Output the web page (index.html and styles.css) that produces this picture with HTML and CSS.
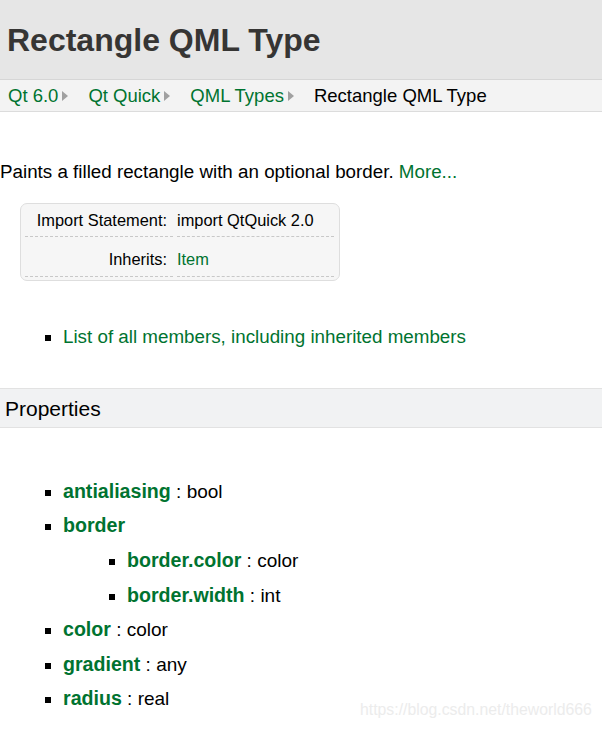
FILE: index.html
```html
<!DOCTYPE html>
<html lang="en">
<head>
    <meta charset="UTF-8">
    <title>Rectangle QML Type</title>
    <link rel="stylesheet" href="styles.css">
</head>
<body>
    <div class="header">
        <h1>Rectangle QML Type</h1>
    </div>
    <div class="crumbs">
        <a href="#">Qt 6.0</a><span class="arrow"></span>
        <a href="#">Qt Quick</a><span class="arrow"></span>
        <a href="#">QML Types</a><span class="arrow"></span>
        <span class="current">Rectangle QML Type</span>
    </div>

    <p class="brief">Paints a filled rectangle with an optional border. <a href="#">More...</a></p>

    <div class="alignedsummary">
        <table>
            <tr class="first">
                <td class="memItemLeft">Import Statement:</td>
                <td class="memItemRight">import QtQuick 2.0</td>
            </tr>
            <tr class="second">
                <td class="memItemLeft">Inherits:</td>
                <td class="memItemRight"><a href="#">Item</a></td>
            </tr>
        </table>
    </div>

    <ul class="members">
        <li><a href="#">List of all members, including inherited members</a></li>
    </ul>

    <h2 class="section">Properties</h2>

    <ul class="props">
        <li><a href="#"><b>antialiasing</b></a> : bool</li>
        <li><a href="#"><b>border</b></a>
            <ul>
                <li><a href="#"><b>border.color</b></a> : color</li>
                <li><a href="#"><b>border.width</b></a> : int</li>
            </ul>
        </li>
        <li><a href="#"><b>color</b></a> : color</li>
        <li><a href="#"><b>gradient</b></a> : any</li>
        <li><a href="#"><b>radius</b></a> : real</li>
    </ul>

    <div class="watermark">https://blog.csdn.net/theworld666</div>
</body>
</html>
```

FILE: styles.css
```css
body {
    margin: 0;
    font-family: "Liberation Sans", Arial, sans-serif;
    color: #000;
    background: #fff;
    overflow: hidden;
}
a {
    color: #007330;
    text-decoration: none;
}
.header {
    height: 79px;
    background: #e6e6e6;
    border-bottom: 1px solid #d6d6d6;
    display: flex;
    align-items: center;
}
.header h1 {
    margin: 2px 0 0 7px;
    font-size: 32px;
    font-weight: bold;
    color: #363534;
}
.crumbs {
    height: 31px;
    background: #f3f3f3;
    border-bottom: 1px solid #dcdcdc;
    display: flex;
    align-items: center;
    padding-left: 8px;
    font-size: 18.5px;
}
.crumbs .arrow {
    width: 0;
    height: 0;
    border-top: 5px solid transparent;
    border-bottom: 5px solid transparent;
    border-left: 6px solid #a0a0a0;
    margin: 1px 20px 0 4px;
}
.crumbs .current {
    color: #000;
}
.brief {
    margin: 49px 0 0 0;
    font-size: 18.8px;
    line-height: 22px;
}
.alignedsummary {
    margin: 20px 0 0 20px;
    width: 318px;
    background: #f6f6f6;
    border: 1px solid #dedede;
    border-radius: 7px;
    padding: 0 0 3px 0;
}
.alignedsummary table {
    border-collapse: separate;
    border-spacing: 4px 0;
    font-size: 16.4px;
}
.alignedsummary td {
    border-bottom: 1px dashed #c8c8c8;
    padding: 0 2px;
}
.first td {
    height: 31px;
    padding-top: 1px;
}
.second td {
    height: 34px;
    padding-top: 5px;
}
.memItemLeft {
    text-align: right;
    width: 140px;
    padding-right: 6px !important;
}
.memItemRight {
    width: 155px;
    padding-left: 0 !important;
}
.members {
    list-style: square;
    margin: 45px 0 0 0;
    padding-left: 63px;
    font-size: 18.8px;
    line-height: 22px;
}
.section {
    margin: 40px 0 0 0;
    height: 38px;
    line-height: 40px;
    background: #f1f2f3;
    border-top: 1px solid #e2e2e2;
    border-bottom: 1px solid #e2e2e2;
    font-size: 21px;
    font-weight: normal;
    padding-left: 5px;
}
.props {
    list-style: square;
    margin: 46px 0 0 0;
    padding-left: 63px;
    font-size: 19px;
}
.props li {
    line-height: 21px;
    padding: 6.8px 0;
}
.props b {
    font-size: 19.6px;
}
.props ul {
    list-style: square;
    padding-left: 64px;
    margin: 6.8px 0 -6.8px 0;
}
.watermark {
    position: absolute;
    left: 360px;
    top: 701px;
    font-size: 15.8px;
    color: #ececec;
}
```
